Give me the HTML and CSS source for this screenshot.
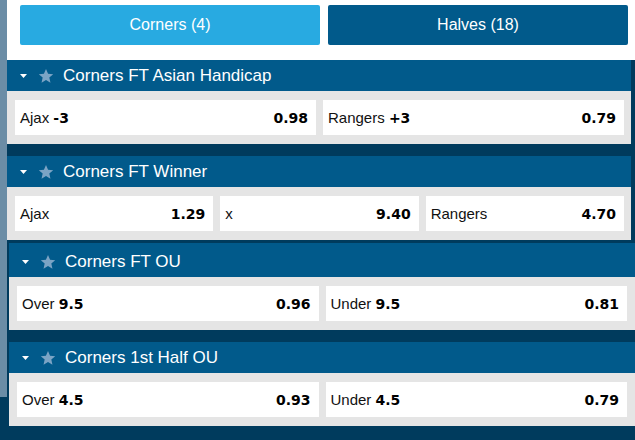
FILE: index.html
```html
<!DOCTYPE html>
<html>
<head>
<meta charset="utf-8">
<link rel="stylesheet" href="styles.css">
</head>
<body>
<div class="page">
  <div class="rail"></div>
  <div class="main">
    <div class="tabs">
      <div class="tab tab-active">Corners (4)</div>
      <div class="tab">Halves (18)</div>
    </div>

    <section class="market">
      <div class="market-head">
        <svg class="caret" viewBox="0 0 7 4"><polygon points="0,0 7,0 3.5,4" fill="#fff"/></svg>
        <svg class="star" viewBox="0 0 24 24"><path d="M12 1.5l3.1 7.1 7.7.7-5.8 5.1 1.7 7.6L12 18l-6.7 4 1.7-7.6-5.8-5.1 7.7-.7z"/></svg>
        <span class="title">Corners FT Asian Handicap</span>
      </div>
      <div class="market-body">
        <div class="odd"><span class="label">Ajax <b>-3</b></span><span class="price">0.98</span></div>
        <div class="odd"><span class="label">Rangers <b>+3</b></span><span class="price">0.79</span></div>
      </div>
    </section>

    <section class="market market-tight">
      <div class="market-head">
        <svg class="caret" viewBox="0 0 7 4"><polygon points="0,0 7,0 3.5,4" fill="#fff"/></svg>
        <svg class="star" viewBox="0 0 24 24"><path d="M12 1.5l3.1 7.1 7.7.7-5.8 5.1 1.7 7.6L12 18l-6.7 4 1.7-7.6-5.8-5.1 7.7-.7z"/></svg>
        <span class="title">Corners FT Winner</span>
      </div>
      <div class="market-body">
        <div class="odd"><span class="label">Ajax</span><span class="price">1.29</span></div>
        <div class="odd"><span class="label">x</span><span class="price">9.40</span></div>
        <div class="odd"><span class="label">Rangers</span><span class="price">4.70</span></div>
      </div>
    </section>

    <section class="market market-shift">
      <div class="market-head market-head-tall">
        <svg class="caret" viewBox="0 0 7 4"><polygon points="0,0 7,0 3.5,4" fill="#fff"/></svg>
        <svg class="star" viewBox="0 0 24 24"><path d="M12 1.5l3.1 7.1 7.7.7-5.8 5.1 1.7 7.6L12 18l-6.7 4 1.7-7.6-5.8-5.1 7.7-.7z"/></svg>
        <span class="title">Corners FT OU</span>
      </div>
      <div class="market-body">
        <div class="odd"><span class="label">Over <b>9.5</b></span><span class="price">0.96</span></div>
        <div class="odd"><span class="label">Under <b>9.5</b></span><span class="price">0.81</span></div>
      </div>
    </section>

    <section class="market market-shift">
      <div class="market-head">
        <svg class="caret" viewBox="0 0 7 4"><polygon points="0,0 7,0 3.5,4" fill="#fff"/></svg>
        <svg class="star" viewBox="0 0 24 24"><path d="M12 1.5l3.1 7.1 7.7.7-5.8 5.1 1.7 7.6L12 18l-6.7 4 1.7-7.6-5.8-5.1 7.7-.7z"/></svg>
        <span class="title">Corners 1st Half OU</span>
      </div>
      <div class="market-body">
        <div class="odd"><span class="label">Over <b>4.5</b></span><span class="price">0.93</span></div>
        <div class="odd"><span class="label">Under <b>4.5</b></span><span class="price">0.79</span></div>
      </div>
    </section>
  </div>
</div>
</body>
</html>
```

FILE: styles.css
```css
* { box-sizing: border-box; }

html, body {
  margin: 0;
  padding: 0;
}

body {
  background: #003b5d;
  font-family: "Liberation Sans", Arial, sans-serif;
  width: 635px;
  height: 440px;
  overflow: hidden;
}

.page {
  display: flex;
  align-items: flex-start;
}

.rail {
  width: 7px;
  height: 397px;
  background: #6b8da6;
  flex: none;
}

.main {
  flex: 1;
  min-width: 0;
}

.tabs {
  background: #ffffff;
  height: 60px;
  padding: 5px 7px 0 13px;
  display: flex;
  gap: 8px;
}

.tab {
  width: 300px;
  height: 40px;
  border-radius: 2px;
  background: #015a8b;
  color: #ffffff;
  font-size: 16px;
  display: flex;
  align-items: center;
  justify-content: center;
}

.tab-active {
  background: #28aae1;
}

.market {
  margin: 0 4px 12px 0;
}

.market-tight {
  margin-bottom: 3px;
}

.market-shift {
  margin: 0 0 12px 2px;
}

.market-head {
  height: 31px;
  background: #015a8b;
  display: flex;
  align-items: center;
  padding-left: 13px;
  color: #ffffff;
}

.market-head-tall {
  height: 34px;
  padding-top: 3px;
}

.caret {
  width: 7px;
  height: 4px;
  margin-top: 1px;
  flex: none;
}

.star {
  width: 16px;
  height: 16px;
  margin-left: 11px;
  fill: #7ba4c5;
  flex: none;
}

.title {
  margin-left: 9px;
  font-size: 17px;
  white-space: nowrap;
}

.market-body {
  background: #e5e5e5;
  padding: 9px 7px 9px 8px;
  display: flex;
  gap: 7px;
}

.market-shift .market-body {
  padding-right: 8px;
}

.odd {
  flex: 1;
  height: 35px;
  background: #ffffff;
  display: flex;
  align-items: center;
  justify-content: space-between;
  padding: 0 8px 0 5px;
  color: #111111;
  font-size: 15px;
  white-space: nowrap;
}

.label b,
.price {
  font-family: "DejaVu Sans", Verdana, sans-serif;
  font-weight: bold;
  font-size: 14px;
  color: #000000;
}
```
